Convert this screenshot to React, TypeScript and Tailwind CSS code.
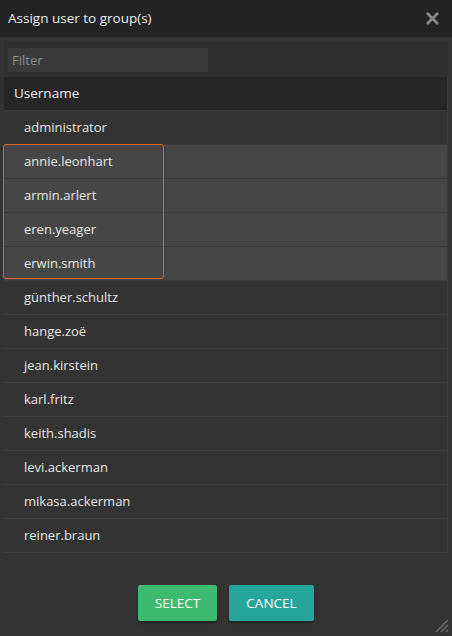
import { X } from "lucide-react";

const users = [
  "administrator",
  "annie.leonhart",
  "armin.arlert",
  "eren.yeager",
  "erwin.smith",
  "günther.schultz",
  "hange.zoë",
  "jean.kirstein",
  "karl.fritz",
  "keith.shadis",
  "levi.ackerman",
  "mikasa.ackerman",
  "reiner.braun",
];

const selected = new Set(["annie.leonhart", "armin.arlert", "eren.yeager", "erwin.smith"]);

export default function App() {
  return (
    <div
      className="flex h-[636px] w-[452px] flex-col bg-[#333333] text-[#e6e6e6]"
      style={{ fontFamily: '"Open Sans", "Noto Sans", sans-serif' }}
    >
      <div className="flex h-[37px] shrink-0 items-center justify-between bg-[#232323] pl-2 pr-[10px]">
        <span className="text-[13.5px] text-[#ececec]">Assign user to group(s)</span>
        <X className="h-[19px] w-[19px] text-[#8a8a8a]" strokeWidth={3.4} />
      </div>

      <div className="relative mx-1 mt-1 flex flex-col bg-[#2f2f2f]">
        <div className="px-1 pb-[5px] pt-[6px]">
          <input
            placeholder="Filter"
            className="h-6 w-[200px] bg-[#3a3a3a] px-1 text-[13px] text-[#ddd] placeholder-[#8d8d8d] outline-none"
          />
        </div>
        <div className="border-r border-[#3c3c3c]">
          <div className="flex h-[34px] items-center border-b border-[#3b3b3b] bg-[#262626] pl-[10px] text-[13.5px] text-[#ececec]">
            Username
          </div>
          {users.map(u => (
            <div
              key={u}
              className={`flex h-[34px] items-center border-b pl-5 text-[13px] ${
                selected.has(u) ? "border-[#3a3a3a] bg-[#464646]" : "border-[#3d3d3d] bg-[#333333]"
              }`}
            >
              {u}
            </div>
          ))}
        </div>
        {/* lasso around the picked rows */}
        <div className="pointer-events-none absolute left-[-1px] top-[103px] h-[135px] w-[161px] rounded-[3px] border border-[#e0622a]" />
      </div>

      <div className="relative flex flex-1 items-start justify-center gap-3 pt-8">
        <button className="h-9 w-[79px] rounded-[2px] bg-[#3dba6f] text-[13.5px] text-white shadow-[0_2px_3px_rgba(0,0,0,0.35)]">
          SELECT
        </button>
        <button className="h-9 w-[85px] rounded-[2px] bg-[#26a69a] text-[13.5px] text-white shadow-[0_2px_3px_rgba(0,0,0,0.35)]">
          CANCEL
        </button>
        <svg className="absolute bottom-[3px] right-[3px]" width="14" height="14" viewBox="0 0 14 14">
          <path d="M13 1 L1 13 M13 6 L6 13 M13 11 L11 13" stroke="#6a6a6a" strokeWidth="1.6" />
        </svg>
      </div>
    </div>
  );
}
